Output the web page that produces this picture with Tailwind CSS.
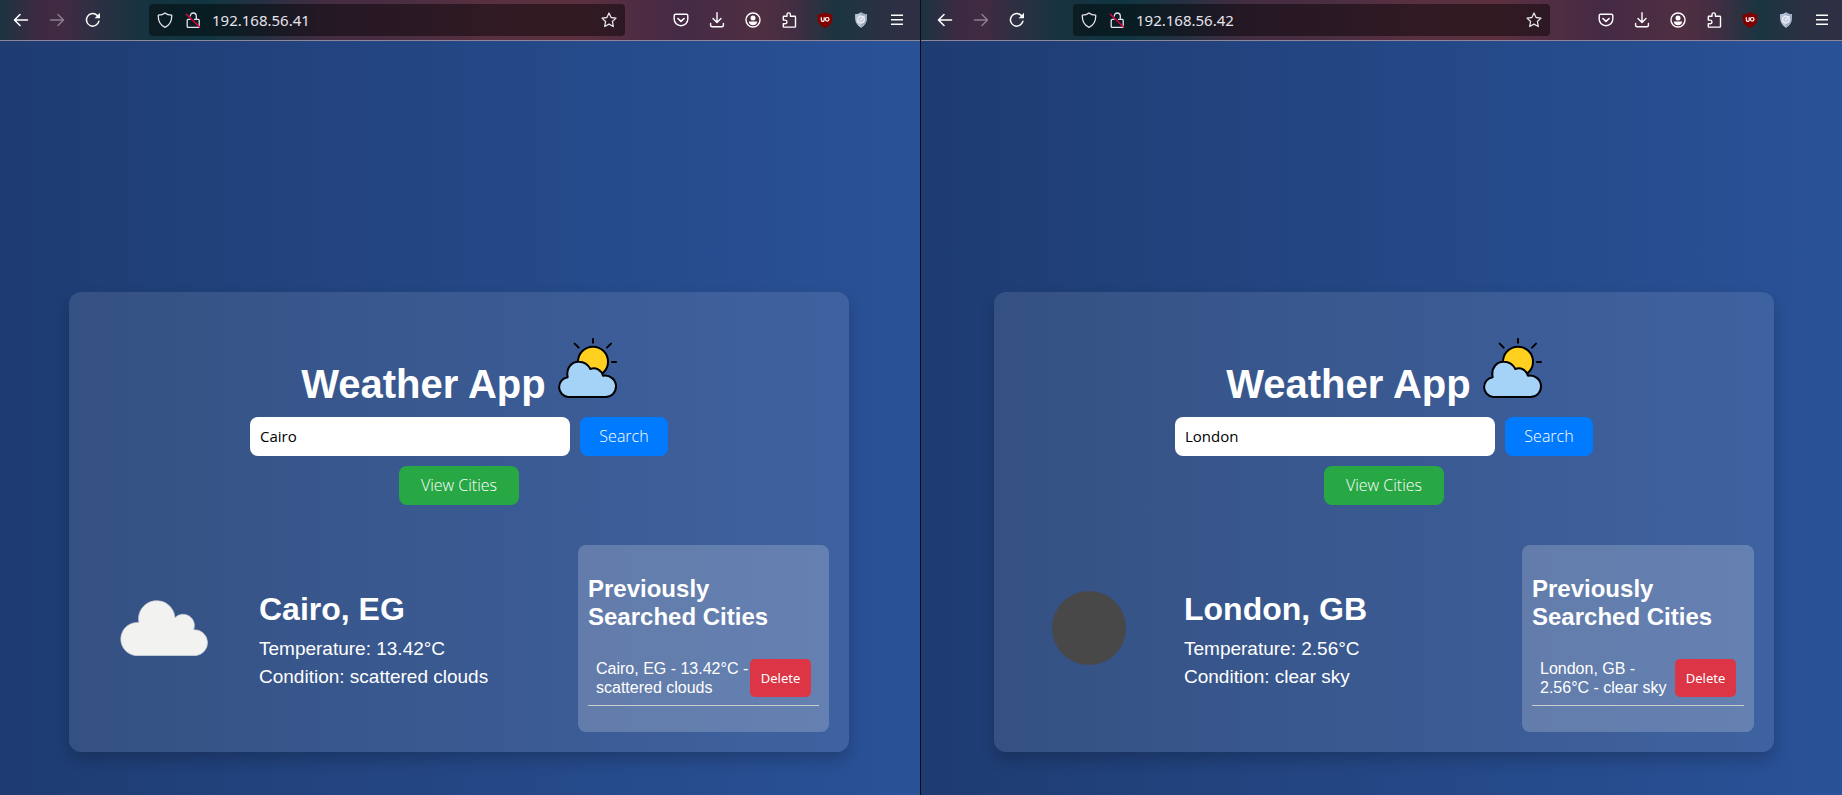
<!DOCTYPE html>
<html lang="en">
<head>
<meta charset="utf-8">
<title>Weather App</title>
<script src="https://cdn.jsdelivr.net/npm/@tailwindcss/browser@4"></script>
</head>
<body class="min-h-screen bg-black font-['Liberation_Sans',Arial,sans-serif] text-white">
<svg class="hidden" aria-hidden="true">
  <symbol id="back" viewBox="0 0 16 16"><path d="M14.5 8H1.8M7 2.5 1.5 8 7 13.5" fill="none" stroke="currentColor" stroke-width="1.6" stroke-linecap="round" stroke-linejoin="round"/></symbol>
  <symbol id="forward" viewBox="0 0 16 16"><path d="M1.5 8h12.7M9 2.5 14.5 8 9 13.5" fill="none" stroke="currentColor" stroke-width="1.4" stroke-linecap="round" stroke-linejoin="round"/></symbol>
  <symbol id="reload" viewBox="0 0 16 16"><path d="M13.9 9.2A6.3 6.3 0 1 1 12.2 3.4" fill="none" stroke="currentColor" stroke-width="1.5" stroke-linecap="round"/><path d="M15 .8v5.4H9.6z" fill="currentColor"/></symbol>
  <symbol id="shield" viewBox="0 0 16 16"><path d="M8 .9C6.3 2.3 4 3 1.3 3.2 1 8.5 3 13 8 15.3 13 13 15 8.5 14.7 3.2 12 3 9.7 2.3 8 .9z" fill="none" stroke="currentColor" stroke-width="1.3" stroke-linejoin="round"/></symbol>
  <symbol id="lock" viewBox="0 0 16 16"><path d="M5.3 4.5C5.3 2.2 6.500 1 8.2 1s3.1 1.3 3.1 3.2v3.1M5.500 7.3H3.2c-.6 0-1 .4-1 1v6.2c0 .5.4.9 1 .9h10.1c.5 0 .9-.4.9-.9V8.3c0-.6-.4-1-.9-1H9" fill="none" stroke="currentColor" stroke-width="1.3"/><path d="M1.3 2.3 14.7 15" stroke="#e8003f" stroke-width="1.4" stroke-linecap="round"/></symbol>
  <symbol id="star" viewBox="0 0 16 16"><path d="m8 1 2.1 4.5 4.9.6-3.6 3.4.9 5L8 12.1 3.7 14.5l.9-5L1 6.1l4.9-.6z" fill="none" stroke="currentColor" stroke-width="1.3" stroke-linejoin="round"/></symbol>
  <symbol id="pocket" viewBox="0 0 16 16"><path d="M2.6 2.2h10.8c.8 0 1.4.6 1.4 1.4v3.6a6.8 6.5 0 0 1-13.6 0V3.6c0-.8.6-1.4 1.4-1.4z" fill="none" stroke="currentColor" stroke-width="1.4"/><path d="m4.9 6.5 3.1 2.9 3.1-2.9" fill="none" stroke="currentColor" stroke-width="1.6" stroke-linecap="round" stroke-linejoin="round"/></symbol>
  <symbol id="download" viewBox="0 0 16 16"><path d="M8 .8v9.5M4 6.6l4 4 4-4M1.6 11.5v1.7c0 .9.6 1.5 1.5 1.5h9.8c.9 0 1.5-.6 1.5-1.5v-1.7" fill="none" stroke="currentColor" stroke-width="1.4" stroke-linecap="round" stroke-linejoin="round"/></symbol>
  <symbol id="account" viewBox="0 0 16 16"><circle cx="8" cy="8" r="7" fill="none" stroke="currentColor" stroke-width="1.4"/><circle cx="8" cy="5.9" r="2.5" fill="currentColor"/><path d="M3.8 9.5h8.4c0 2.3-2 3.7-4.2 3.7S3.8 11.8 3.8 9.5z" fill="currentColor"/></symbol>
  <symbol id="puzzle" viewBox="0 0 16 16"><path d="M6 4.300V2.6a1.7 1.7 0 0 1 3.4 0v1.7h4.4c.4 0 .7.3.7.7v9.4c0 .4-.3.7-.7.7H3c-.4 0-.7-.3-.7-.7v-2.7h1.9a1.8 1.8 0 0 0 0-3.6H2.3V5c0-.4.3-.7.7-.7h3z" fill="none" stroke="currentColor" stroke-width="1.4" stroke-linejoin="round"/></symbol>
  <symbol id="blocker" viewBox="0 0 16 16"><path d="M8 .2C5.800 1.700 3.400 2.300 .7 2.300V7C.7 11.700 4 14.200 8 16C12 14.200 15.300 11.700 15.300 7V2.300C12.600 2.300 10.200 1.700 8 .2z" fill="#800000"/><path d="M4.300 5.300v2.600c0 1.900 2.900 1.900 2.900 0V5.300" fill="none" stroke="#fff" stroke-width="1.2"/><circle cx="10.200" cy="7.300" r="1.800" fill="none" stroke="#fff" stroke-width="1.2"/></symbol>
  <symbol id="guard" viewBox="0 0 16 16"><path d="M8 .2C6.5 1.5 4.3 2 2.2 2c-.5 6 .3 10.5 5.8 13.8C13.5 12.5 14.3 8 13.8 2 11.7 2 9.5 1.5 8 .2z" fill="#b9c3d8"/><path d="M8 .2v15.600C13.5 12.5 14.3 8 13.8 2 11.7 2 9.5 1.5 8 .2z" fill="#9eabc5"/><circle cx="8" cy="7.6" r="3.4" fill="#c4ccdc" stroke="#e9edf4" stroke-width="1.3"/><path d="m7 8.5 4.500-4.700" stroke="#e9edf4" stroke-width="1.2"/></symbol>
  <symbol id="menu" viewBox="0 0 16 16"><path d="M2 3.2h12M2 7.7h12M2 12.3h12" stroke="currentColor" stroke-width="1.5"/></symbol>
  <symbol id="suncloud" viewBox="0 0 180 180"><g stroke="#000" stroke-width="6" stroke-linecap="round" stroke-linejoin="round"><circle cx="108" cy="71" r="45" fill="#ffd01f"/><path d="M108 3v11M53 17l12 12M162 17l-12 12M165 72h12" fill="none"/><path d="M33 177a30 30 0 0 1-1-59.500C26 87 47 70 66 71c15 0 27 8 34 22 16-7 33 3 38 20 21-3 39 12 39 32 0 18-13 32-31 32z" fill="#a5d3f7"/></g></symbol>
</svg>

<div class="grid min-h-screen grid-cols-[920fr_1px_921fr]">
  <section class="flex min-w-0 flex-col bg-linear-to-r from-[#1e3c72] to-[#2a5298]">
    <header class="flex h-[41px] items-center border-b border-[#8f8799] bg-[linear-gradient(90deg,#1b3340_0%,#3d2a42_4%,#402b42_7%,#2a3042_11%,#17333f_15%,#0f3541_22%,#243142_28%,#432c42_35%,#4c2e42_45%,#5a3040_54%,#5c3040_63%,#452a45_74%,#4f2f42_83%,#442d42_86%,#1a3540_91%,#2c3043_96%,#2e3044_100%)] pr-[5px] pl-[3px]">
      <nav class="flex" aria-label="History">
        <button class="grid size-9 place-items-center" aria-label="Back"><svg class="size-4"><use href="#back"/></svg></button>
        <button class="grid size-9 place-items-center text-white/40" aria-label="Forward"><svg class="size-4"><use href="#forward"/></svg></button>
        <button class="grid size-9 place-items-center" aria-label="Reload"><svg class="size-4"><use href="#reload"/></svg></button>
      </nav>
      <div class="mx-[38px] flex h-8 min-w-0 flex-1 items-center rounded bg-black/45 px-2 text-[#e6e3ea]">
        <svg class="size-4 shrink-0"><use href="#shield"/></svg>
        <svg class="ml-3 size-4 shrink-0"><use href="#lock"/></svg>
        <input class="ml-[11px] min-w-0 flex-1 bg-transparent pb-px font-['Noto_Sans',sans-serif] text-[15px] leading-5 outline-none" aria-label="Address" value="192.168.56.41">
        <button aria-label="Bookmark"><svg class="size-4"><use href="#star"/></svg></button>
      </div>
      <div class="flex">
        <button class="grid size-9 place-items-center" aria-label="Pocket"><svg class="size-4"><use href="#pocket"/></svg></button>
        <button class="grid size-9 place-items-center" aria-label="Downloads"><svg class="size-4"><use href="#download"/></svg></button>
        <button class="grid size-9 place-items-center" aria-label="Account"><svg class="size-4"><use href="#account"/></svg></button>
        <button class="grid size-9 place-items-center" aria-label="Extensions"><svg class="size-4"><use href="#puzzle"/></svg></button>
        <button class="grid size-9 place-items-center" aria-label="Ad blocker"><svg class="size-4"><use href="#blocker"/></svg></button>
        <button class="grid size-9 place-items-center" aria-label="Privacy guard"><svg class="size-4"><use href="#guard"/></svg></button>
        <button class="grid size-9 place-items-center" aria-label="Menu"><svg class="size-4"><use href="#menu"/></svg></button>
      </div>
    </header>
    <main class="flex flex-1 items-end justify-center pr-[2px] pb-[43px]">
      <div class="w-full max-w-[780px] rounded-xl bg-white/10 px-5 pt-[46px] pb-5 shadow-[0_8px_16px_rgba(0,0,0,0.2)]">
        <h1 class="text-center text-[40px] leading-[46px] font-bold">Weather App <svg class="inline size-[60px] align-baseline"><use href="#suncloud"/></svg></h1>
        <form class="mt-[10px] flex flex-wrap justify-center gap-[10px] px-40 font-['Open_Sans',sans-serif] text-base" onsubmit="return false">
          <input class="h-[39px] w-80 rounded-lg bg-white px-[10px] pb-0.5 text-[15px] text-black outline-none" aria-label="City" value="Cairo">
          <button class="h-[39px] min-w-[88px] rounded-lg bg-[#007bff] pb-0.5 font-light">Search</button>
          <button type="button" class="h-[39px] min-w-[120px] rounded-lg bg-[#28a745] pb-0.5 font-light">View Cities</button>
        </form>
        <div class="mt-10 flex items-center justify-between">
          <div class="flex items-center gap-5">
            <div class="grid w-[150px] place-items-center pb-[22px]">
              <svg class="h-14 w-[90px]" viewBox="0 0 268 168" role="img" aria-label="Scattered clouds"><path d="M50 167A49.500 49.500 0 1 1 58.500 67.500 54.800 54.800 0 1 1 166.900 53 34 34 0 0 1 223 89 39 39 0 1 1 228 167z" fill="#f2f2f0" stroke="#c3cad6" stroke-width="2"/></svg>
            </div>
            <div class="pt-1">
              <h2 class="mb-1.5 text-[32px] leading-[39px] font-bold">Cairo, EG</h2>
              <p class="text-[19px] leading-7">Temperature: 13.42°C</p>
              <p class="text-[19px] leading-7">Condition: scattered clouds</p>
            </div>
          </div>
          <aside class="w-[251px] rounded-lg bg-white/20 px-[10px] pt-[30px] pb-[26px]">
            <h3 class="mb-5 text-2xl leading-7 font-bold">Previously Searched Cities</h3>
            <ul>
              <li class="flex items-center justify-between border-b border-[#cccccc] p-2 leading-[19px]">
                <span>Cairo, EG - 13.42°C - scattered clouds</span>
                <button class="h-[38px] w-[61px] shrink-0 rounded-[5px] bg-[#dc3545] font-['Noto_Sans',sans-serif] text-[13px]">Delete</button>
              </li>
            </ul>
          </aside>
        </div>
      </div>
    </main>
  </section>
  <div class="bg-[#0b0d14]"></div>
  <section class="flex min-w-0 flex-col bg-linear-to-r from-[#1e3c72] to-[#2a5298]">
    <header class="flex h-[41px] items-center border-b border-[#8f8799] bg-[linear-gradient(90deg,#1b3340_0%,#3d2a42_4%,#402b42_7%,#2a3042_11%,#17333f_15%,#0f3541_22%,#243142_28%,#432c42_35%,#4c2e42_45%,#5a3040_54%,#5c3040_63%,#452a45_74%,#4f2f42_83%,#442d42_86%,#1a3540_91%,#2c3043_96%,#2e3044_100%)] pr-[2px] pl-[6px]">
      <nav class="flex" aria-label="History">
        <button class="grid size-9 place-items-center" aria-label="Back"><svg class="size-4"><use href="#back"/></svg></button>
        <button class="grid size-9 place-items-center text-white/40" aria-label="Forward"><svg class="size-4"><use href="#forward"/></svg></button>
        <button class="grid size-9 place-items-center" aria-label="Reload"><svg class="size-4"><use href="#reload"/></svg></button>
      </nav>
      <div class="mx-[38px] flex h-8 min-w-0 flex-1 items-center rounded bg-black/45 px-2 text-[#e6e3ea]">
        <svg class="size-4 shrink-0"><use href="#shield"/></svg>
        <svg class="ml-3 size-4 shrink-0"><use href="#lock"/></svg>
        <input class="ml-[11px] min-w-0 flex-1 bg-transparent pb-px font-['Noto_Sans',sans-serif] text-[15px] leading-5 outline-none" aria-label="Address" value="192.168.56.42">
        <button aria-label="Bookmark"><svg class="size-4"><use href="#star"/></svg></button>
      </div>
      <div class="flex">
        <button class="grid size-9 place-items-center" aria-label="Pocket"><svg class="size-4"><use href="#pocket"/></svg></button>
        <button class="grid size-9 place-items-center" aria-label="Downloads"><svg class="size-4"><use href="#download"/></svg></button>
        <button class="grid size-9 place-items-center" aria-label="Account"><svg class="size-4"><use href="#account"/></svg></button>
        <button class="grid size-9 place-items-center" aria-label="Extensions"><svg class="size-4"><use href="#puzzle"/></svg></button>
        <button class="grid size-9 place-items-center" aria-label="Ad blocker"><svg class="size-4"><use href="#blocker"/></svg></button>
        <button class="grid size-9 place-items-center" aria-label="Privacy guard"><svg class="size-4"><use href="#guard"/></svg></button>
        <button class="grid size-9 place-items-center" aria-label="Menu"><svg class="size-4"><use href="#menu"/></svg></button>
      </div>
    </header>
    <main class="flex flex-1 items-end justify-center pb-[43px] pl-[5px]">
      <div class="w-full max-w-[780px] rounded-xl bg-white/10 px-5 pt-[46px] pb-5 shadow-[0_8px_16px_rgba(0,0,0,0.2)]">
        <h1 class="text-center text-[40px] leading-[46px] font-bold">Weather App <svg class="inline size-[60px] align-baseline"><use href="#suncloud"/></svg></h1>
        <form class="mt-[10px] flex flex-wrap justify-center gap-[10px] px-40 font-['Open_Sans',sans-serif] text-base" onsubmit="return false">
          <input class="h-[39px] w-80 rounded-lg bg-white px-[10px] pb-0.5 text-[15px] text-black outline-none" aria-label="City" value="London">
          <button class="h-[39px] min-w-[88px] rounded-lg bg-[#007bff] pb-0.5 font-light">Search</button>
          <button type="button" class="h-[39px] min-w-[120px] rounded-lg bg-[#28a745] pb-0.5 font-light">View Cities</button>
        </form>
        <div class="mt-10 flex items-center justify-between">
          <div class="flex items-center gap-5">
            <div class="grid w-[150px] place-items-center pb-[22px]">
              <div class="size-[74px] rounded-full bg-[#484848]" role="img" aria-label="Clear sky"></div>
            </div>
            <div class="pt-1">
              <h2 class="mb-1.5 text-[32px] leading-[39px] font-bold">London, GB</h2>
              <p class="text-[19px] leading-7">Temperature: 2.56°C</p>
              <p class="text-[19px] leading-7">Condition: clear sky</p>
            </div>
          </div>
          <aside class="w-[232px] rounded-lg bg-white/20 px-[10px] pt-[30px] pb-[26px]">
            <h3 class="mb-5 text-2xl leading-7 font-bold">Previously Searched Cities</h3>
            <ul>
              <li class="flex items-center justify-between border-b border-[#cccccc] p-2 leading-[19px]">
                <span>London, GB - 2.56°C - clear sky</span>
                <button class="h-[38px] w-[61px] shrink-0 rounded-[5px] bg-[#dc3545] font-['Noto_Sans',sans-serif] text-[13px]">Delete</button>
              </li>
            </ul>
          </aside>
        </div>
      </div>
    </main>
  </section>
</div>
</body>
</html>
